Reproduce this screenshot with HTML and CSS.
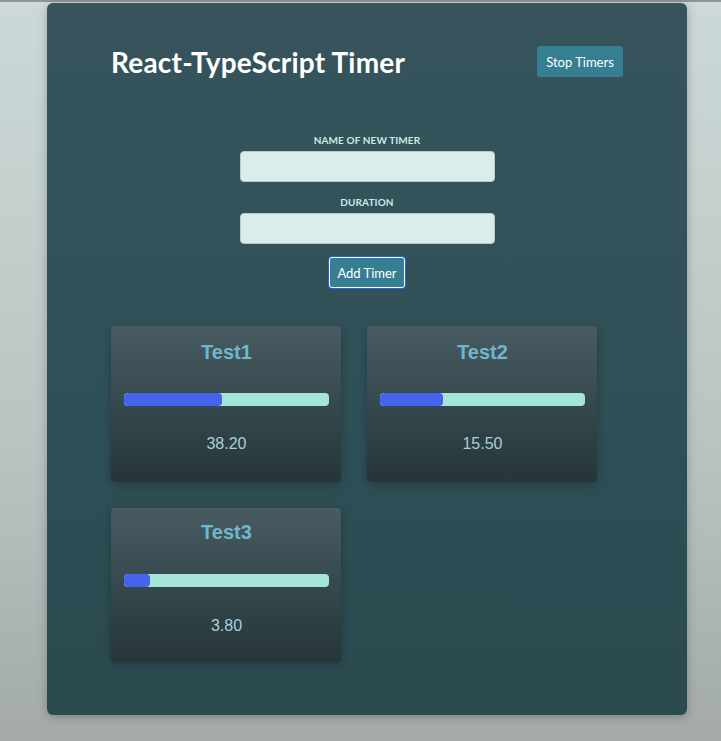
FILE: index.html
```html
<!DOCTYPE html>
<html>
<head>
<meta charset="utf-8">
<link rel="stylesheet" href="styles.css">
</head>
<body>
<div class="topline"></div>
<main class="panel">
  <header class="header">
    <h1 class="title">React-TypeScript Timer</h1>
    <button class="btn stop">Stop Timers</button>
  </header>
  <form class="form">
    <label class="label" for="name">Name of new timer</label>
    <input class="input" id="name" type="text">
    <label class="label second" for="dur">Duration</label>
    <input class="input" id="dur" type="text">
    <button class="btn add" type="button">Add Timer</button>
  </form>
  <section class="grid">
    <div class="card">
      <h2 class="card-title">Test1</h2>
      <div class="bar"><div class="fill" style="width:47.8%"></div></div>
      <div class="value">38.20</div>
    </div>
    <div class="card">
      <h2 class="card-title">Test2</h2>
      <div class="bar"><div class="fill" style="width:30.7%"></div></div>
      <div class="value">15.50</div>
    </div>
    <div class="card short">
      <h2 class="card-title">Test3</h2>
      <div class="bar"><div class="fill" style="width:12.7%"></div></div>
      <div class="value">3.80</div>
    </div>
  </section>
</main>
</body>
</html>
```
FILE: styles.css
```css
* { box-sizing: border-box; }
html, body { margin: 0; padding: 0; }
body {
  min-height: 741px;
  background: linear-gradient(180deg, #cdd9d8 0%, #b9c4c2 60%, #a3aaa8 100%);
  font-family: Lato, "Open Sans", sans-serif;
}
.topline {
  height: 2px;
  background: #8f9796;
}
.panel {
  width: 640px;
  margin: 1px 0 0 47px;
  padding: 43px 64px 53px;
  background: linear-gradient(180deg, #37545c 0%, #2f4f56 60%, #2a4a50 100%);
  border-radius: 6px;
  box-shadow: 0 2px 10px rgba(0, 0, 0, 0.25);
}
.header {
  display: flex;
  justify-content: space-between;
  align-items: center;
  height: 31px;
}
.title {
  margin: 0;
  font-size: 28px;
  font-weight: 700;
  color: #ffffff;
  letter-spacing: 0.2px;
}
.btn {
  font-family: Lato, "Open Sans", sans-serif;
  background: #367f92;
  color: #ffffff;
  border: none;
  border-radius: 3px;
  font-size: 13px;
  cursor: pointer;
}
.stop {
  width: 86px;
  height: 31px;
}
.form {
  display: flex;
  flex-direction: column;
  align-items: center;
  margin-top: 57px;
}
.label {
  font-size: 10px;
  line-height: 12px;
  font-weight: 700;
  text-transform: uppercase;
  color: #cde9e6;
  margin-bottom: 5px;
  letter-spacing: 0.1px;
}
.label.second { margin-top: 14px; }
.input {
  width: 255px;
  height: 31px;
  background: #daeceb;
  border: 1px solid #b9c9c8;
  border-radius: 4px;
  margin: 0;
}
.add {
  margin-top: 13px;
  width: 76px;
  height: 31px;
  border: 1px solid #ffffff;
  box-shadow: 0 0 0 1px #2466d6;
  font-size: 13px;
}
.grid {
  display: grid;
  grid-template-columns: 230px 230px;
  gap: 26px;
  margin-top: 38px;
  align-items: start;
}
.card {
  padding: 14px 12px 28px 13px;
  border-radius: 4px;
  background: linear-gradient(180deg, #485b60 0%, #34474c 55%, #263538 100%);
  box-shadow: 0 2px 8px rgba(0, 0, 0, 0.25);
  text-align: center;
  font-family: "Liberation Sans", Arial, sans-serif;
}
.card-title {
  margin: 0;
  font-size: 20px;
  line-height: 24px;
  font-weight: 700;
  color: #6fb7cd;
}
.bar {
  margin-top: 29px;
  height: 13px;
  border-radius: 4px;
  background: #a6e6da;
  overflow: hidden;
}
.fill {
  height: 100%;
  background: #4763ee;
  border-radius: 4px;
}
.value {
  margin-top: 28px;
  font-size: 16px;
  line-height: 20px;
  color: #a9cfd8;
}
.card.short {
  padding-top: 12px;
  padding-bottom: 26px;
}
.card.short .bar { margin-top: 30px; }
.card.short .value { margin-top: 29px; }
```
